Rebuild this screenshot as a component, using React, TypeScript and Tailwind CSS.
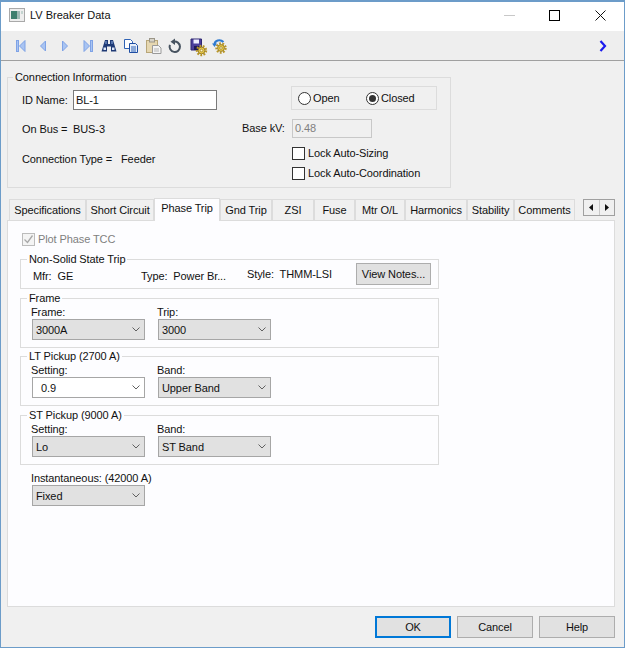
import type { ReactNode } from "react";

const tabs = [
  { label: "Specifications", width: "w-[77px]" },
  { label: "Short Circuit", width: "w-[68px]" },
  { label: "Phase Trip", width: "w-[66px]", active: true },
  { label: "Gnd Trip", width: "w-[52px]" },
  { label: "ZSI", width: "w-[42px]" },
  { label: "Fuse", width: "w-[41px]" },
  { label: "Mtr O/L", width: "w-[50px]" },
  { label: "Harmonics", width: "w-[62px]" },
  { label: "Stability", width: "w-[47px]" },
  { label: "Comments", width: "w-[61px]" },
];

function Gear({ x, y }: { x: number; y: number }) {
  return (
    <g transform={`translate(${x} ${y})`}>
      <circle r="4.6" fill="none" stroke="#b8962a" strokeWidth="2.2" strokeDasharray="1.8 1.4" />
      <circle r="3.4" fill="#e6c84a" stroke="#8a6d16" strokeWidth="0.8" />
      <circle r="1.3" fill="#fff6c8" stroke="#8a6d16" strokeWidth="0.6" />
    </g>
  );
}

function ToolIcon({ children }: { children: ReactNode }) {
  return (
    <svg viewBox="0 0 16 16" className="h-4 w-4 shrink-0 overflow-visible">
      {children}
    </svg>
  );
}

function Toolbar() {
  const nav = { fill: "#a9c4f2", stroke: "#7fa3e6", strokeWidth: 1 };
  return (
    <div className="flex h-[29px] items-center bg-[#eeeeee] pl-[12px] pr-[17px]">
      <div className="flex gap-[6px]">
        <ToolIcon>
          <rect x="3.5" y="2.5" width="2" height="11" {...nav} />
          <path d="M12 2.5v11L6.5 8z" {...nav} />
        </ToolIcon>
        <ToolIcon>
          <path d="M10.5 3v10L5.5 8z" {...nav} />
        </ToolIcon>
        <ToolIcon>
          <path d="M5.5 3v10l5-5z" {...nav} />
        </ToolIcon>
        <ToolIcon>
          <path d="M5 2.5v11L10.5 8z" {...nav} />
          <rect x="11.5" y="2.5" width="2" height="11" {...nav} />
        </ToolIcon>
        <ToolIcon>
          <path d="M4 2h3v4h2V2h3l3.500 11.500H10V8.500H6v5H.5z" fill="#1f3a75" />
          <rect x="2.500" y="9.500" width="2.500" height="2.500" fill="#dfe8f8" />
          <rect x="11" y="9.500" width="2.500" height="2.500" fill="#dfe8f8" />
          <rect x="4.500" y="3" width="1" height="3" fill="#8fb0e6" />
          <rect x="10.500" y="3" width="1" height="3" fill="#8fb0e6" />
        </ToolIcon>
        <ToolIcon>
          <path d="M1.500 1.500h6l2 2v7h-8z" fill="#fff" stroke="#2f62b5" />
          <path d="M6.500 5.500h6l2 2v7h-8z" fill="#e8effa" stroke="#1f4ea3" />
          <path d="M8 9h5M8 11h5M8 13h5" stroke="#2f62b5" />
        </ToolIcon>
        <ToolIcon>
          <rect x="1.500" y="2.500" width="11" height="12" fill="#e6d7b0" stroke="#b8a679" />
          <rect x="4.500" y="0.500" width="5" height="3.500" fill="#d7d3c8" stroke="#9b9688" />
          <path d="M7.500 7.500h6l2.500 2.500v5.500H7.500z" fill="#f4f4f4" stroke="#9a9a9a" />
          <path d="M9 11h5M9 13h5" stroke="#b5b5b5" />
        </ToolIcon>
        <ToolIcon>
          <path d="M6.500 3.700a5.200 5.200 0 1 1-3.600 3.200" fill="none" stroke="#46525f" strokeWidth="2" />
          <path d="M8 .5v6.500L3.500 3.800z" fill="#46525f" />
        </ToolIcon>
        <ToolIcon>
          <path d="M2 1h10.500v11H2z" fill="#4a3f9c" stroke="#2e2670" />
          <rect x="4.500" y="1.500" width="5.500" height="4" fill="#eeeeff" />
          <rect x="5" y="8" width="5" height="4" fill="#1e1a55" />
          <Gear x={12.500} y={12.500} />
        </ToolIcon>
        <ToolIcon>
          <Gear x={10} y={10} />
          <path d="M3.500 6.500C3.500 2.500 9 .5 12.500 4" fill="none" stroke="#2f7ad0" strokeWidth="2" />
          <path d="M1 5.500h5L3.500 9z" fill="#2f7ad0" />
        </ToolIcon>
      </div>
      <svg viewBox="0 0 8 12" className="ml-auto h-3 w-2">
        <path d="M1.500 1l4.500 5-4.500 5" fill="none" stroke="#1a1aee" strokeWidth="2.200" />
      </svg>
    </div>
  );
}

function Check({ checked, disabled }: { checked?: boolean; disabled?: boolean }) {
  return (
    <span
      className={`flex h-[13px] w-[13px] shrink-0 items-center justify-center border ${
        disabled ? "border-[#bcbcbc] bg-[#f4f4f4]" : "border-[#333333] bg-white"
      }`}
    >
      {checked && (
        <svg viewBox="0 0 11 11" className="h-[11px] w-[11px]">
          <path d="M1.500 5.500l3 3 5-7" fill="none" stroke="#a8a8a8" strokeWidth="1.300" />
        </svg>
      )}
    </span>
  );
}

function Radio({ checked, label, width }: { checked?: boolean; label: string; width: string }) {
  return (
    <span className={`flex items-center gap-[2px] ${width}`}>
      <span className="flex h-[13px] w-[13px] items-center justify-center rounded-full border border-[#333333] bg-white">
        {checked && <span className="h-[7px] w-[7px] rounded-full bg-[#333333]" />}
      </span>
      {label}
    </span>
  );
}

function Group({ title, children, className }: { title: string; children: ReactNode; className: string }) {
  return (
    <fieldset className={`border border-[#dcdcdc] ${className}`}>
      <legend className="ml-[6px] px-[2px] leading-[12px]">{title}</legend>
      {children}
    </fieldset>
  );
}

function Combo({ label, value, white, labelClass = "" }: { label: string; value: string; white?: boolean; labelClass?: string }) {
  return (
    <div className="w-[113px]">
      <div className={`h-[15px] leading-[17px] ${labelClass}`}>{label}</div>
      <div
        className={`flex h-[21px] items-center border border-[#a6a6a6] pr-[4px] ${
          white ? "bg-white pl-[8px]" : "bg-[#e1e1e1] pl-[3px]"
        }`}
      >
        {value}
        <svg viewBox="0 0 8 5" className="ml-auto h-[5px] w-2">
          <path d="M.5.5L4 4 7.500.5" fill="none" stroke="#606060" />
        </svg>
      </div>
    </div>
  );
}

function ActionButton({ label, primary }: { label: string; primary?: boolean }) {
  return (
    <button
      type="button"
      className={`h-[22px] w-[76px] bg-[#e1e1e1] ${
        primary ? "border-2 border-[#0078d7]" : "border border-[#adadad]"
      }`}
    >
      {label}
    </button>
  );
}

export default function App() {
  return (
    <div
      className="flex h-[648px] w-[625px] flex-col overflow-hidden border border-t-2 border-[#6c9cc9] bg-[#f0f0f0] text-[11px] leading-[14px] tracking-[-0.1px] text-[#111111]"
      style={{ fontFamily: '"Liberation Sans", Arial, sans-serif' }}
    >
      {/* title bar */}
      <div className="flex h-[29px] shrink-0 items-center bg-white pb-[3px] pl-[8px]">
        <svg viewBox="0 0 16 14" className="h-[14px] w-4">
          <rect x=".5" y=".5" width="15" height="13" fill="#eeeeee" stroke="#a9a9a9" />
          <rect x="2" y="3" width="6" height="8" fill="#3f7f6e" />
          <rect x="8" y="3" width="3" height="8" fill="#9fb9b4" />
          <rect x="12" y="3" width="2" height="3" fill="#c4d4d0" />
        </svg>
        <span className="ml-[5px] text-[11px] tracking-normal">LV Breaker Data</span>
        <svg viewBox="0 0 11 1" className="ml-auto h-px w-[11px]">
          <rect width="11" height="1" fill="#c8c8c8" />
        </svg>
        <span className="ml-[34px] h-[11px] w-[11px] border border-black" />
        <svg viewBox="0 0 11 11" className="ml-[35px] mr-[18px] h-[11px] w-[11px]">
          <path d="M.5.5l10 10M10.500.5l-10 10" stroke="#111111" />
        </svg>
      </div>

      <Toolbar />
      <div className="h-px shrink-0 bg-[#a0a0a0]" />

      {/* connection info */}
      <fieldset className="ml-[6px] mt-[9px] h-[118px] w-[444px] shrink-0 border border-[#dcdcdc]">
        <legend className="ml-[5px] px-[2px] leading-[14px]">Connection Information</legend>
        <div className="mt-[6px] flex">
          <div className="ml-[14px] w-[269px]">
            <div className="flex h-[19px] items-center">
              <span className="w-[51px]">ID Name:</span>
              <div className="flex h-[20px] w-[144px] items-center border border-[#7a7a7a] bg-white pl-[2px]">BL-1</div>
            </div>
            <div className="mt-[13px] flex">
              <span className="w-[51px]">On Bus =</span>
              BUS-3
            </div>
            <div className="mt-[16px] flex">
              <span className="w-[99px]">Connection Type =</span>
              Feeder
            </div>
          </div>
          <div className="-mt-[4px]">
            <div className="flex h-[24px] w-[146px] items-center border border-[#dcdcdc] pl-[6px]">
              <Radio label="Open" width="w-[68px]" />
              <Radio checked label="Closed" width="w-[70px]" />
            </div>
            <div className="relative ml-px mt-[9px] h-[19px] w-[80px] border border-[#c8c8c8] pl-[2px] leading-[17px] text-[#808080]">
              0.48
              <span className="absolute -left-[51px] top-0 text-[#111111]">Base kV:</span>
            </div>
            <div className="ml-px mt-[8px] flex items-center gap-[3px]">
              <Check />
              Lock Auto-Sizing
            </div>
            <div className="ml-px mt-[6px] flex items-center gap-[3px]">
              <Check />
              Lock Auto-Coordination
            </div>
          </div>
        </div>
      </fieldset>

      {/* tab strip */}
      <div className="ml-[8px] mt-[9px] flex h-[23px] shrink-0 items-end">
        {tabs.map((tab) => (
          <div
            key={tab.label}
            className={`flex shrink-0 items-center justify-center whitespace-nowrap border border-[#dcdcdc] ${tab.width} ${
              tab.active ? "z-10 -mb-px h-[23px] border-b-0 bg-[#fdfdff] pb-[4px]" : "h-[21px] border-b-0 bg-[#f0f0f0]"
            }`}
          >
            {tab.label}
          </div>
        ))}
        <div className="mb-[4px] ml-[8px] flex h-[17px] w-[32px] border border-[#a0a0a0] bg-[#f0f0f0]">
          <span className="flex flex-1 items-center justify-center border-r border-[#c8c8c8]">
            <svg viewBox="0 0 4 7" className="h-[7px] w-1">
              <path d="M4 0v7L0 3.500z" fill="#111111" />
            </svg>
          </span>
          <span className="flex flex-1 items-center justify-center">
            <svg viewBox="0 0 4 7" className="h-[7px] w-1">
              <path d="M0 0v7l4-3.500z" fill="#111111" />
            </svg>
          </span>
        </div>
      </div>

      {/* tab body */}
      <div className="ml-[6px] h-[387px] w-[608px] shrink-0 border border-[#dcdcdc] bg-[#fdfdff] pl-[12px]">
        <div className="ml-[2px] mt-[11px] flex items-center gap-[3px] text-[#808080]">
          <Check checked disabled />
          Plot Phase TCC
        </div>

        <Group title="Non-Solid State Trip" className="mt-[7px] h-[36px] w-[419px]">
          <div className="-mt-[2px] flex h-[22px] items-center pl-[12px]">
            <span className="mt-[4px] w-[108px]">Mfr:&nbsp; GE</span>
            <span className="mt-[4px] w-[106px]">Type:&nbsp; Power Br...</span>
            <span className="w-[109px]">Style:&nbsp; THMM-LSI</span>
            <button type="button" className="h-[22px] w-[75px] border border-[#adadad] bg-[#e1e1e1]">
              View Notes...
            </button>
          </div>
        </Group>

        <Group title="Frame" className="mt-[3px] h-[56px] w-[419px]">
          <div className="flex gap-[13px] pl-[11px]">
            <Combo label="Frame:" value="3000A" labelClass="-ml-px" />
            <Combo label="Trip:" value="3000" labelClass="-ml-px" />
          </div>
        </Group>

        <Group title="LT Pickup (2700 A)" className="mt-[2px] h-[56px] w-[419px]">
          <div className="flex gap-[13px] pl-[11px]">
            <Combo label="Setting:" value="0.9" white labelClass="-ml-px" />
            <Combo label="Band:" value="Upper Band" labelClass="-ml-px" />
          </div>
        </Group>

        <Group title="ST Pickup (9000 A)" className="mt-[3px] h-[56px] w-[419px]">
          <div className="flex gap-[13px] pl-[11px]">
            <Combo label="Setting:" value="Lo" labelClass="-ml-px" />
            <Combo label="Band:" value="ST Band" labelClass="-ml-px" />
          </div>
        </Group>

        <div className="ml-[12px] mt-[5px]">
          <Combo label="Instantaneous: (42000 A)" value="Fixed" labelClass="-ml-px whitespace-nowrap" />
        </div>
      </div>

      {/* footer buttons */}
      <div className="flex flex-1 justify-end gap-[6px] pr-[9px] pt-[9px]">
        <ActionButton label="OK" primary />
        <ActionButton label="Cancel" />
        <ActionButton label="Help" />
      </div>
    </div>
  );
}
